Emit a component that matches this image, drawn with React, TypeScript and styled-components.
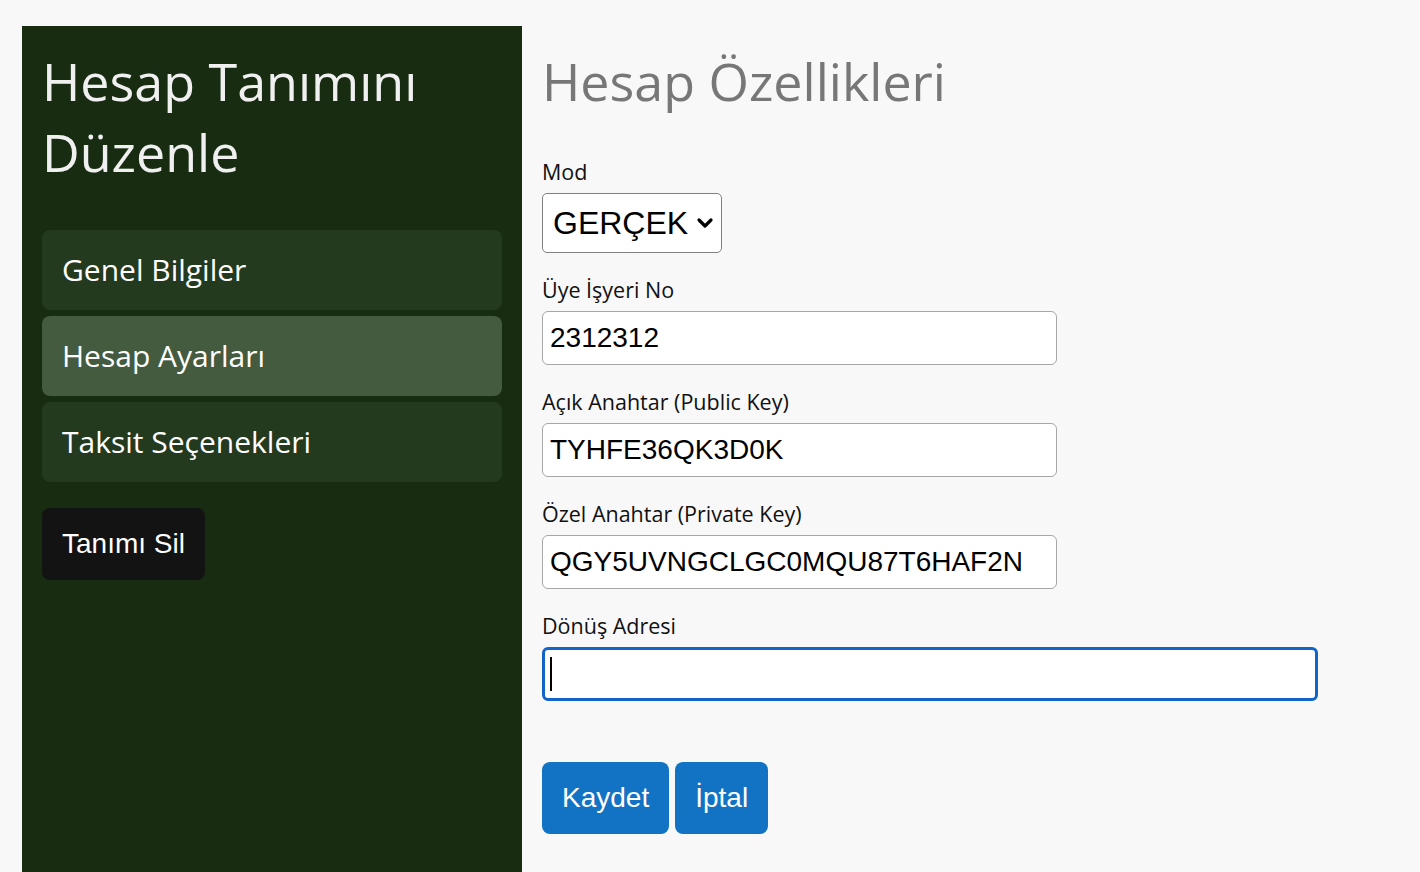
import React from "react";
import styled, { createGlobalStyle } from "styled-components";

const GlobalStyle = createGlobalStyle`
	* {
		box-sizing: border-box;
	}
	body {
		margin: 0;
		background: #f8f8f8;
		font-family: "Open Sans", "Noto Sans", sans-serif;
	}
`;

const Page = styled.div`
	display: flex;
	align-items: stretch;
	padding: 26px 0 0 22px;
	min-height: 872px;
`;

const Sidebar = styled.aside`
	width: 500px;
	flex-shrink: 0;
	background: #182c12;
	padding: 20px;
	display: flex;
	flex-direction: column;
	align-items: flex-start;
`;

const SidebarTitle = styled.h1`
	margin: 0 0 42px;
	font-size: 52px;
	font-weight: 400;
	line-height: 70.8px;
	color: #f0f0f0;
`;

const NavList = styled.nav`
	display: flex;
	flex-direction: column;
	gap: 6px;
	width: 100%;
`;

const NavItem = styled.a<{ $active?: boolean }>`
	display: flex;
	align-items: center;
	height: 80px;
	padding: 0 20px;
	border-radius: 8px;
	background: ${({ $active }) => ($active ? "#445b3f" : "#243a1f")};
	color: #ffffff;
	font-size: 30px;
	text-decoration: none;
	cursor: pointer;
`;

const DeleteButton = styled.button`
	margin-top: 26px;
	padding: 20px;
	border: none;
	border-radius: 8px;
	background: #131313;
	color: #ffffff;
	font-family: "Liberation Sans", Arial, sans-serif;
	font-size: 28px;
	line-height: 32px;
	cursor: pointer;
`;

const Main = styled.main`
	flex: 1;
	padding: 20px;
	display: flex;
	flex-direction: column;
	align-items: flex-start;
`;

const Title = styled.h2`
	margin: 0 0 41px;
	font-size: 52px;
	font-weight: 400;
	line-height: 70.8px;
	color: #777777;
`;

const Field = styled.div`
	display: flex;
	flex-direction: column;
	align-items: flex-start;
	margin-bottom: 23px;
`;

const Label = styled.label`
	font-size: 21.5px;
	line-height: 27px;
	color: #111111;
	margin-bottom: 8px;
`;

const SelectWrap = styled.div`
	position: relative;
	width: 180px;
	height: 60px;
`;

const Select = styled.select`
	appearance: none;
	width: 100%;
	height: 100%;
	padding: 0 30px 0 10px;
	border: 1.5px solid #808080;
	border-radius: 5px;
	background: #ffffff;
	color: #000000;
	font-family: "Liberation Sans", Arial, sans-serif;
	font-size: 32px;
	outline: none;
`;

const Chevron = styled.svg`
	position: absolute;
	right: 7px;
	top: 50%;
	transform: translateY(-50%);
	pointer-events: none;
`;

const InputWrap = styled.div`
	position: relative;
`;

const Input = styled.input<{ $width: number; $focused?: boolean }>`
	display: block;
	width: ${({ $width }) => $width}px;
	height: 54px;
	padding: 0 7px;
	border: ${({ $focused }) =>
		$focused ? "3.5px solid #1264c8" : "1.5px solid #a6a6a6"};
	border-radius: 6px;
	background: #ffffff;
	color: #000000;
	font-family: "Liberation Sans", Arial, sans-serif;
	font-size: 28px;
	outline: none;
`;

const Caret = styled.span`
	position: absolute;
	left: 8px;
	top: 10px;
	width: 2px;
	height: 34px;
	background: #000000;
	pointer-events: none;
`;

const Actions = styled.div`
	display: flex;
	gap: 6px;
	margin-top: 38px;
`;

const PrimaryButton = styled.button`
	padding: 20px;
	border: none;
	border-radius: 8px;
	background: #1273c4;
	color: #ffffff;
	font-family: "Liberation Sans", Arial, sans-serif;
	font-size: 28px;
	line-height: 32px;
	cursor: pointer;
`;

const navItems = ["Genel Bilgiler", "Hesap Ayarları", "Taksit Seçenekleri"];

const fields = [
	{ label: "Üye İşyeri No", value: "2312312", width: 515 },
	{ label: "Açık Anahtar (Public Key)", value: "TYHFE36QK3D0K", width: 515 },
	{
		label: "Özel Anahtar (Private Key)",
		value: "QGY5UVNGCLGC0MQU87T6HAF2N",
		width: 515,
	},
];

export default function App() {
	return (
		<>
			<GlobalStyle />
			<Page>
				<Sidebar>
					<SidebarTitle>Hesap Tanımını Düzenle</SidebarTitle>
					<NavList>
						{navItems.map((item, index) => (
							<NavItem key={item} $active={index === 1}>
								{item}
							</NavItem>
						))}
					</NavList>
					<DeleteButton>Tanımı Sil</DeleteButton>
				</Sidebar>
				<Main>
					<Title>Hesap Özellikleri</Title>
					<Field>
						<Label>Mod</Label>
						<SelectWrap>
							<Select defaultValue="GERÇEK">
								<option>GERÇEK</option>
								<option>TEST</option>
							</Select>
							<Chevron width="20" height="12" viewBox="0 0 20 12">
								<path
									d="M4 3 L10 9 L16 3"
									fill="none"
									stroke="#000"
									strokeWidth="3.2"
									strokeLinecap="round"
									strokeLinejoin="round"
								/>
							</Chevron>
						</SelectWrap>
					</Field>
					{fields.map((f) => (
						<Field key={f.label}>
							<Label>{f.label}</Label>
							<Input $width={f.width} defaultValue={f.value} />
						</Field>
					))}
					<Field>
						<Label>Dönüş Adresi</Label>
						<InputWrap>
							<Input $width={776} $focused />
							<Caret />
						</InputWrap>
					</Field>
					<Actions>
						<PrimaryButton>Kaydet</PrimaryButton>
						<PrimaryButton>İptal</PrimaryButton>
					</Actions>
				</Main>
			</Page>
		</>
	);
}
